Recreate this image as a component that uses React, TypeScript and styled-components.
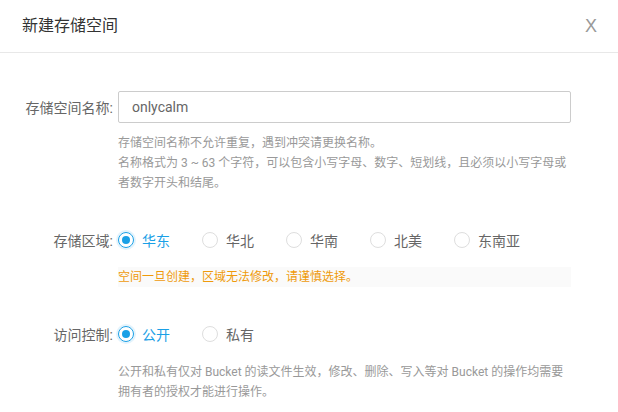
import React from "react";
import styled, { createGlobalStyle } from "styled-components";

const Global = createGlobalStyle`
  html, body { margin: 0; padding: 0; background: #fff; }
  body { font-family: Roboto, "Noto Sans CJK SC", sans-serif; }
  * { box-sizing: border-box; }
`;

const Modal = styled.div`
  width: 618px;
  height: 412px;
  background: #fff;
  overflow: hidden;
`;

const Header = styled.div`
  height: 53px;
  border-bottom: 1px solid #e8e8e8;
  display: flex;
  align-items: center;
  justify-content: space-between;
  padding: 0 21px 1px 22px;
`;

const Title = styled.div`
  font-size: 16px;
  color: #333;
  line-height: 20px;
`;

const Close = styled.span`
  font-family: "Liberation Sans", sans-serif;
  font-size: 18px;
  color: #999;
  line-height: 20px;
  cursor: pointer;
`;

const Body = styled.div`
  padding: 38px 47px 0 22px;
`;

const Row = styled.div<{ $top?: number }>`
  display: flex;
  align-items: center;
  height: 32px;
  margin-top: ${(p) => p.$top ?? 0}px;
`;

const Label = styled.div`
  width: 91px;
  margin-right: 5px;
  text-align: right;
  font-size: 14px;
  color: #666;
  white-space: nowrap;
`;

const Input = styled.input`
  flex: 1;
  height: 32px;
  border: 1px solid #ccc;
  border-radius: 2px;
  padding: 0 13px;
  font-family: Roboto, "Noto Sans CJK SC", sans-serif;
  font-size: 14px;
  color: #666;
  outline: none;
`;

const Help = styled.div<{ $top: number }>`
  margin: ${(p) => p.$top}px 0 0 96px;
  font-size: 12px;
  line-height: 20px;
  color: #999;
`;

const Line = styled.div`
  white-space: nowrap;
`;

const RadioGroup = styled.div`
  display: flex;
  align-items: center;
`;

const RadioItem = styled.label`
  width: 84px;
  display: flex;
  align-items: center;
  gap: 8px;
  cursor: pointer;
`;

const Circle = styled.span<{ $on: boolean }>`
  width: 16px;
  height: 16px;
  border-radius: 50%;
  border: 1px solid ${(p) => (p.$on ? "#1aa0e6" : "#dedede")};
  box-shadow: ${(p) => (p.$on ? "0 0 0 2px rgba(26,160,230,0.12)" : "none")};
  display: flex;
  align-items: center;
  justify-content: center;
  flex: none;
  &::after {
    content: "";
    display: ${(p) => (p.$on ? "block" : "none")};
    width: 8px;
    height: 8px;
    border-radius: 50%;
    background: #1aa0e6;
  }
`;

const RadioText = styled.span<{ $on: boolean }>`
  font-size: 14px;
  color: ${(p) => (p.$on ? "#1aa0e6" : "#666")};
  white-space: nowrap;
`;

const Warning = styled.div`
  margin: 11px 0 0 96px;
  height: 20px;
  line-height: 20px;
  background: #fafafa;
  font-size: 12px;
  color: #ef9a0c;
`;

type RadioProps = { label: string; on?: boolean };
const Radio = ({ label, on = false }: RadioProps) => (
  <RadioItem>
    <Circle $on={on} />
    <RadioText $on={on}>{label}</RadioText>
  </RadioItem>
);

export default function App() {
  return (
    <>
      <Global />
      <Modal>
        <Header>
          <Title>新建存储空间</Title>
          <Close>X</Close>
        </Header>
        <Body>
          <Row>
            <Label>存储空间名称:</Label>
            <Input defaultValue="onlycalm" />
          </Row>
          <Help $top={10}>
            <Line>存储空间名称不允许重复，遇到冲突请更换名称。</Line>
            <Line>名称格式为 3 ~ 63 个字符，可以包含小写字母、数字、短划线，且必须以小写字母或</Line>
            <Line>者数字开头和结尾。</Line>
          </Help>
          <Row $top={31}>
            <Label>存储区域:</Label>
            <RadioGroup>
              <Radio label="华东" on />
              <Radio label="华北" />
              <Radio label="华南" />
              <Radio label="北美" />
              <Radio label="东南亚" />
            </RadioGroup>
          </Row>
          <Warning>空间一旦创建，区域无法修改，请谨慎选择。</Warning>
          <Row $top={31}>
            <Label>访问控制:</Label>
            <RadioGroup>
              <Radio label="公开" on />
              <Radio label="私有" />
            </RadioGroup>
          </Row>
          <Help $top={12}>
            <Line>公开和私有仅对 Bucket 的读文件生效，修改、删除、写入等对 Bucket 的操作均需要</Line>
            <Line>拥有者的授权才能进行操作。</Line>
          </Help>
        </Body>
      </Modal>
    </>
  );
}
